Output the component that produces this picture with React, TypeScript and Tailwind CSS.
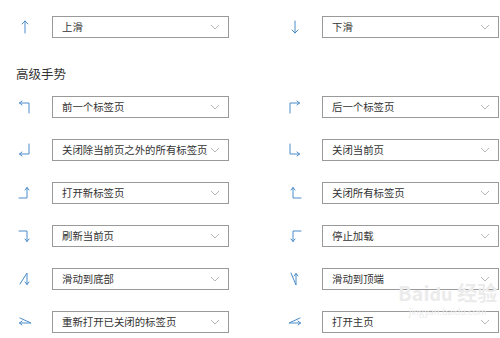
import type { ReactNode } from "react";

const blue = "#4a8cc8";

const Icon = ({ children }: { children: ReactNode }) => (
    <svg
        width="14"
        height="14"
        viewBox="0 0 14 14"
        fill="none"
        stroke={blue}
        strokeWidth="1"
        strokeLinecap="round"
        strokeLinejoin="round"
    >
        {children}
    </svg>
);

const icons: Record<string, ReactNode> = {
    up: (
        <Icon>
            <path d="M7 13V1M4 4l3-3 3 3" />
        </Icon>
    ),
    down: (
        <Icon>
            <path d="M7 1v12M4 10l3 3 3-3" />
        </Icon>
    ),
    prevTab: (
        <Icon>
            <path d="M11 13V3H1.5M4 1L1.5 3 4 5" />
        </Icon>
    ),
    nextTab: (
        <Icon>
            <path d="M2 13V3h9.5M9 1l2.5 2L9 5" />
        </Icon>
    ),
    closeOthers: (
        <Icon>
            <path d="M11 1v10H1.5M4 9l-2.5 2L4 13" />
        </Icon>
    ),
    closeCurrent: (
        <Icon>
            <path d="M2 1v10h9.5M9 9l2.5 2L9 13" />
        </Icon>
    ),
    newTab: (
        <Icon>
            <path d="M1 12h8V1.5M7 4l2-2.5L11 4" />
        </Icon>
    ),
    closeAll: (
        <Icon>
            <path d="M13 12H5V1.5M3 4l2-2.5L7 4" />
        </Icon>
    ),
    refresh: (
        <Icon>
            <path d="M1 2h8v10.5M7 10l2 2.5 2-2.5" />
        </Icon>
    ),
    stop: (
        <Icon>
            <path d="M13 2H5v10.5M3 10l2 2.5 2-2.5" />
        </Icon>
    ),
    toBottom: (
        <Icon>
            <path d="M2 12L9 1v11.5M7 10l2 2.5 2-2.5" />
        </Icon>
    ),
    toTop: (
        <Icon>
            <path d="M3 1l5 12V1.5M6 4l2-2.5L10 4" />
        </Icon>
    ),
    reopen: (
        <Icon>
            <path d="M2 3l11 5H1.5M4 6L1.5 8 4 10" />
        </Icon>
    ),
    home: (
        <Icon>
            <path d="M12 3L1 8h11.5M10 6l2.5 2-2.5 2" />
        </Icon>
    )
};

const Select = ({ label }: { label: string }) => (
    <div className="flex h-[22px] w-[177px] shrink-0 items-center justify-between border border-[#9a9a9a] bg-white pl-[9px] pr-[8px]">
        <span className="whitespace-nowrap text-[10.4px] leading-none text-[#333]">
            {label}
        </span>
        <svg width="10" height="6" viewBox="0 0 10 6" fill="none">
            <path d="M1 1l4 4 4-4" stroke="#a6a6a6" strokeWidth="0.8" />
        </svg>
    </div>
);

const Gesture = ({ icon, label }: { icon: string; label: string }) => (
    <div className="flex w-[270px] shrink-0 items-center">
        <div className="flex w-[34px] shrink-0 items-center">{icons[icon]}</div>
        <Select label={label} />
    </div>
);

const rows: [string, string, string, string][] = [
    ["prevTab", "前一个标签页", "nextTab", "后一个标签页"],
    ["closeOthers", "关闭除当前页之外的所有标签页", "closeCurrent", "关闭当前页"],
    ["newTab", "打开新标签页", "closeAll", "关闭所有标签页"],
    ["refresh", "刷新当前页", "stop", "停止加载"],
    ["toBottom", "滑动到底部", "toTop", "滑动到顶端"],
    ["reopen", "重新打开已关闭的标签页", "home", "打开主页"]
];

export default function App() {
    return (
        <div
            className="relative h-[338px] w-[500px] overflow-hidden bg-white pl-[18px] pt-[16px]"
            style={{ fontFamily: '"Noto Sans CJK SC", "Noto Sans", sans-serif' }}
        >
            <div className="flex">
                <Gesture icon="up" label="上滑" />
                <Gesture icon="down" label="下滑" />
            </div>

            <h3 className="-ml-[2px] mt-[26px] text-[12.5px] leading-[20px] font-normal text-[#333]">
                高级手势
            </h3>

            <div className="mt-[12px] flex flex-col gap-[21px]">
                {rows.map(([li, ll, ri, rl]) => (
                    <div key={ll} className="flex">
                        <Gesture icon={li} label={ll} />
                        <Gesture icon={ri} label={rl} />
                    </div>
                ))}
            </div>

            <div className="pointer-events-none absolute left-[398px] top-[283px] flex flex-col items-center leading-none text-[#ebebeb]">
                <span className="text-[20px] font-bold">Bai<span className="text-[18px]">du</span> 经验</span>
                <span className="mt-[4px] text-[9px]">jingyan.baidu.com</span>
            </div>
        </div>
    );
}
